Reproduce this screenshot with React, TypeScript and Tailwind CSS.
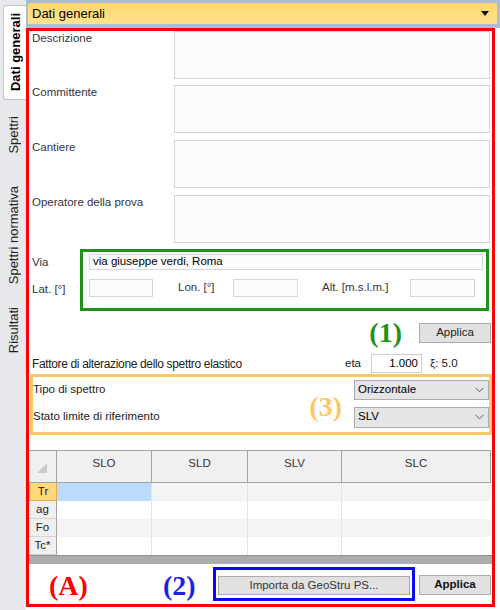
import React from "react";

const Chevron = () => (
  <svg width="9" height="6" viewBox="0 0 9 6" className="shrink-0">
    <polyline points="0.5,0.8 4.5,4.8 8.5,0.8" fill="none" stroke="#5a5a5a" strokeWidth="1" />
  </svg>
);

function Field({ label, gap }: { label: string; gap: string }) {
  return (
    <div className={`flex h-[48px] ${gap}`}>
      <span className="flex-1 pl-[3px] pt-[1px] leading-[12px] text-[11.5px] text-[#33333f]">{label}</span>
      <div className="w-[316px] h-[48px] mr-[2px] border border-[#d4d4d4] bg-[#fcfcff]" />
    </div>
  );
}

function SideTab({ label, h }: { label: string; h: string }) {
  return (
    <div className={`${h} flex items-center justify-center`}>
      <span className="[writing-mode:vertical-rl] rotate-180 text-[13px] text-[#1e1e1e] leading-none">{label}</span>
    </div>
  );
}

const rows = ["Tr", "ag", "Fo", "Tc*"];
const cols = ["SLO", "SLD", "SLV", "SLC"];

export default function App() {
  return (
    <div className="w-[500px] h-[610px] flex bg-white overflow-hidden font-['Liberation_Sans',Arial,sans-serif] text-[11px] text-[#222]">
      {/* vertical tab strip */}
      <aside className="w-[26px] shrink-0 bg-[#e7e8eb] flex flex-col pt-[5px]">
        <div className="ml-[3px] h-[95px] bg-white border border-r-0 border-[#c6c6c6] rounded-l-[3px] flex items-center justify-center">
          <span className="[writing-mode:vertical-rl] rotate-180 font-bold text-[13px] text-black leading-none">Dati generali</span>
        </div>
        <SideTab label="Spettri" h="h-[70px]" />
        <SideTab label="Spettri normativa" h="h-[130px]" />
        <SideTab label="Risultati" h="h-[60px]" />
      </aside>

      <main className="w-[474px] flex flex-col">
        {/* section selector */}
        <div className="h-[28px] bg-[#abbdd8] pl-[2px] pr-[3px] pt-[3px]">
          <div className="h-[21px] rounded-[2px] bg-linear-to-b from-[#ffd86c] to-[#ffe28c] flex items-center justify-between pl-[4px] pr-[8px] text-[13px] text-black">
            <span>Dati generali</span>
            <svg width="8" height="5" viewBox="0 0 8 5">
              <path d="M0 0H8L4 5Z" fill="#111" />
            </svg>
          </div>
        </div>

        <div className="w-[469px] h-[579px] border-[3px] border-[#ff0000] flex flex-col">
          <Field label="Descrizione" gap="" />
          <Field label="Committente" gap="mt-[6px]" />
          <Field label="Cantiere" gap="mt-[7px]" />
          <Field label="Operatore della prova" gap="mt-[7px]" />

          {/* location */}
          <div className="flex mt-[6px]">
            <div className="w-[51px] pl-[3px]">
              <div className="pt-[6px] leading-[14px] text-[11.5px] text-[#33333f]">Via</div>
              <div className="pt-[13px] leading-[14px] text-[11.5px] text-[#33333f]">Lat. [°]</div>
            </div>
            <div className="w-[409px] h-[62px] border-[3px] border-[#1d931d] flex flex-col">
              <div className="ml-[6px] mr-[3px] mt-[2px] h-[16px] border border-[#d6d6d6] bg-[#fcfcff] pl-[3px] flex items-center text-[11.5px] text-black">
                via giuseppe verdi, Roma
              </div>
              <div className="flex items-center h-[18px] mt-[9px] ml-[6px] text-[11.5px]">
                <div className="w-[64px] h-[18px] border border-[#d6d6d6] bg-[#fcfcff]" />
                <span className="ml-[25px] w-[55px] text-[#33333f]">Lon. [°]</span>
                <div className="w-[65px] h-[18px] border border-[#d6d6d6] bg-[#fcfcff]" />
                <span className="ml-[24px] w-[88px] text-[#33333f]">Alt. [m.s.l.m.]</span>
                <div className="w-[65px] h-[18px] border border-[#d6d6d6] bg-[#fcfcff]" />
              </div>
            </div>
          </div>

          {/* apply location */}
          <div className="flex items-center justify-end h-[26px] mt-[9px] pr-[1px]">
            <span className="font-['Liberation_Serif',serif] font-bold text-[28px] leading-none text-[#1d931d]">(1)</span>
            <button className="ml-[17px] w-[72px] h-[20px] bg-[#e1e1e1] border border-[#adadad] text-[11.5px] text-[#222]">Applica</button>
          </div>

          {/* spectrum factor */}
          <div className="flex items-center h-[19px] mt-[8px]">
            <span className="flex-1 pl-[3px] text-[12px] tracking-[-0.35px] text-[#222]">Fattore di alterazione dello spettro elastico</span>
            <span className="w-[26px] text-[11.5px]">eta</span>
            <div className="w-[51px] h-[19px] border border-[#cfcfcf] bg-white flex items-center justify-end pr-[3px] text-[11.5px] text-black">1.000</div>
            <span className="ml-[8px] w-[62px] text-[11.5px]">ξ: 5.0</span>
          </div>

          {/* spectrum type */}
          <div className="ml-[1px] mt-[1px] h-[61px] border-[3px] border-[#fdc86a] flex items-center">
            <div className="flex-1 flex flex-col text-[11.5px]">
              <div className="h-[20px] mt-[-3px] flex items-center text-[#222]">Tipo di spettro</div>
              <div className="h-[20px] mt-[7px] flex items-center text-[#222]">Stato limite di riferimento</div>
            </div>
            <span className="mr-[12px] mt-[5px] font-['Liberation_Serif',serif] font-bold text-[28px] leading-none text-[#fdc86a]">(3)</span>
            <div className="w-[135px] flex flex-col">
              <div className="h-[20px] mt-[-2px] border border-[#acacac] bg-[#e5e5e5] flex items-center justify-between pl-[3px] pr-[4px] text-[11.5px] text-black">
                <span>Orizzontale</span>
                <Chevron />
              </div>
              <div className="h-[21px] mt-[7px] border border-[#acacac] bg-[#e5e5e5] flex items-center justify-between pl-[3px] pr-[4px] text-[11.5px] text-black">
                <span>SLV</span>
                <Chevron />
              </div>
            </div>
          </div>

          {/* values table */}
          <div className="mt-[15px] mr-[1px] grid grid-cols-[28px_95px_96px_94px_1fr] text-[11.5px]">
            <div className="h-[33px] bg-[#f0f0f0] border-t border-r border-b border-[#a3a3a3] flex items-end justify-end pr-[9px] pb-[9px]">
              <svg width="10" height="10" viewBox="0 0 10 10">
                <path d="M10 0V10H0Z" fill="#cbcbcb" />
              </svg>
            </div>
            {cols.map((c) => (
              <div key={c} className="h-[33px] bg-[#f0f0f0] border-t border-r border-b border-[#a3a3a3] flex justify-center pt-[4px] text-[#333] last:border-r-0">
                {c}
              </div>
            ))}
            {rows.map((r, i) => (
              <React.Fragment key={r}>
                <div
                  className={`h-[18px] flex items-center justify-center border-r border-b ${
                    i === 0 ? "bg-[#fed97c] border-[#e6ac4c] border-l" : "bg-[#f0f0f0] border-[#d3d3d3] border-r-[#a3a3a3]"
                  } text-[#222]`}
                >
                  {r}
                </div>
                {cols.map((c, j) => (
                  <div
                    key={c}
                    className={`h-[18px] border-r border-[#e3e3e3] ${
                      i === 0 && j === 0 ? "bg-[#badbfa]" : i % 2 === 0 ? "bg-[#f4f4f4]" : "bg-white"
                    } ${j === 3 ? "border-r-0" : ""}`}
                  />
                ))}
              </React.Fragment>
            ))}
          </div>
          <div className="h-[9px] bg-[#acacac] border-t border-[#8e8e8e]" />

          {/* footer */}
          <div className="flex-1 flex items-center">
            <div className="w-[134px] pl-[20px] pt-[3px]">
              <span className="font-['Liberation_Serif',serif] font-bold text-[28px] leading-none text-[#ff0000]">(A)</span>
            </div>
            <div className="w-[50px] pt-[3px]">
              <span className="font-['Liberation_Serif',serif] font-bold text-[28px] leading-none text-[#1f1fe6]">(2)</span>
            </div>
            <div className="w-[202px] h-[34px] border-[3px] border-[#0a0aff] pt-[6px] px-[2px] pb-[3px] flex">
              <button className="w-full h-[19px] bg-[#e1e1e1] border border-[#adadad] text-[11.5px] text-[#333]">Importa da GeoStru PS...</button>
            </div>
            <button className="ml-[4px] w-[72px] h-[20px] mt-[2px] bg-[#e1e1e1] border border-[#adadad] text-[11.5px] font-bold text-[#111]">Applica</button>
          </div>
        </div>
      </main>
    </div>
  );
}
